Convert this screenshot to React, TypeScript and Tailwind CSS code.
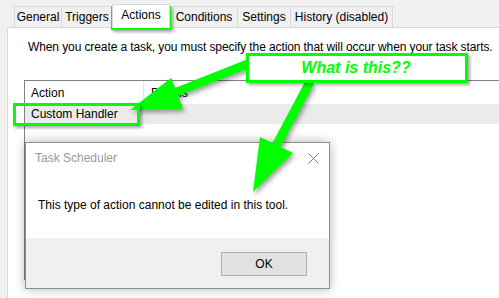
export default function App() {
  const tabs = [
    { label: "General", w: "w-[47px]" },
    { label: "Triggers", w: "w-[51px]" },
    { label: "Actions", w: "w-[58px]", active: true },
    { label: "Conditions", w: "w-[67px]" },
    { label: "Settings", w: "w-[53px]" },
    { label: "History (disabled)", w: "w-[103px]" },
  ];

  return (
    <div className="relative w-[499px] h-[298px] overflow-hidden bg-[#f0f0f0] font-['Liberation_Sans',Arial,sans-serif] text-[12px] text-black">
      {/* tab strip */}
      <div className="flex items-end h-[27px] pl-[14px]">
        {tabs.map((t, i) =>
          t.active ? (
            <div
              key={t.label}
              className={`${t.w} relative z-10 -mb-px h-[24px] pb-[4px] flex items-center justify-center bg-white border-t border-l border-r border-[#d9d9d9]`}
            >
              {t.label}
            </div>
          ) : (
            <div
              key={t.label}
              className={`${t.w} h-[21px] flex items-center justify-center border-t border-l border-[#d9d9d9] ${
                i === tabs.length - 1 ? "border-r" : ""
              }`}
            >
              {t.label}
            </div>
          )
        )}
      </div>

      {/* tab page */}
      <div className="ml-[7px] h-[272px] bg-white border-l border-t border-[#d9d9d9]">
        <p className="pl-[20px] pt-[11px] leading-[16px] whitespace-nowrap tracking-[-0.1px]">
          When you create a task, you must specify the action that will occur when your task starts.
        </p>
        <div className="ml-[16px] mt-[25px] h-[200px] border-l border-t border-[#828282]">
          <div className="flex h-[23px] items-center">
            <div className="w-[119px] h-full pl-[6px] flex items-center border-r border-[#e5e5e5]">Action</div>
            <div className="pl-[7px]">Details</div>
          </div>
          <div className="flex h-[20px] items-center pl-[6px] bg-[#ebebeb]">Custom Handler</div>
        </div>
      </div>

      {/* dialog */}
      <div className="absolute left-[25px] top-[142px] w-[305px] h-[147px] flex flex-col bg-white border border-[#8f8f8f] shadow-[0_0_10px_rgba(0,0,0,0.3)]">
        <div className="flex h-[30px] items-center justify-between pl-[9px] pr-[10px]">
          <span className="text-[#999999]">Task Scheduler</span>
          <svg width="11" height="11" viewBox="0 0 11 11">
            <path d="M0.5 0.5 L10.5 10.5 M10.5 0.5 L0.5 10.5" stroke="#7a7a7a" strokeWidth="1" />
          </svg>
        </div>
        <div className="flex flex-1 items-center pl-[12px] pb-[1px]">
          This type of action cannot be edited in this tool.
        </div>
        <div className="flex h-[50px] justify-end pt-[14px] pr-[22px] bg-[#f0f0f0]">
          <button className="w-[86px] h-[24px] bg-[#e1e1e1] border border-[#adadad] text-[12px]">OK</button>
        </div>
      </div>

      {/* annotation arrows */}
      <svg
        className="absolute left-0 top-0 drop-shadow-[2px_3px_2px_rgba(0,0,0,0.35)]"
        width="499"
        height="298"
        viewBox="0 0 499 298"
      >
        <polygon
          fill="#00ff00"
          points="130,110 171,78 175,88 248,59 252,67 178,96 183,109"
        />
        <polygon
          fill="#00ff00"
          points="253,192 260,137 272.5,143 306,80 314,84 280.5,147 293,153"
        />
      </svg>

      {/* annotation boxes */}
      <div className="absolute left-[111px] top-[6px] w-[60px] h-[24px] border-[3px] border-[#00ff00] shadow-[2px_2px_3px_rgba(0,0,0,0.35)]" />
      <div className="absolute left-[13px] top-[103px] w-[127px] h-[23px] border-[3px] border-[#00ff00] shadow-[2px_2px_3px_rgba(0,0,0,0.35)]" />
      <div className="absolute left-[246px] top-[53px] w-[222px] h-[30px] flex items-center justify-center bg-white border-[3px] border-[#00ff00] shadow-[2px_2px_3px_rgba(0,0,0,0.35)]">
        <span className="text-[16px] font-bold italic text-[#00ff00] pr-[2px]">What is this??</span>
      </div>
    </div>
  );
}
